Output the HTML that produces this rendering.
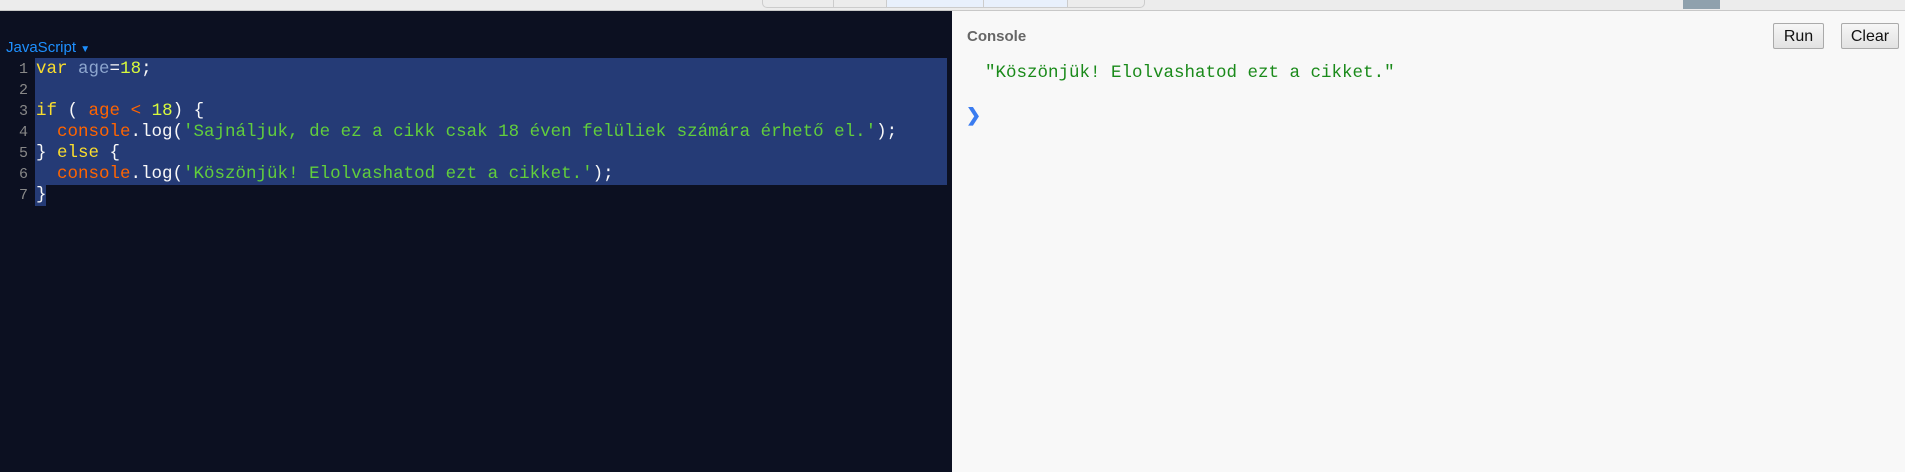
<!DOCTYPE html>
<html><head><meta charset="utf-8"><style>
body{margin:0;width:1905px;height:472px;overflow:hidden;position:relative;background:#f8f8f8;font-family:"Liberation Sans",sans-serif}
.top{position:absolute;left:0;top:0;width:1905px;height:10px;background:#ececec;border-bottom:1px solid #c8c8c8}
.tab{position:absolute;top:0;height:7px;border:1px solid #ccc;border-top:none;background:#ececec}
.left{position:absolute;left:0;top:11px;width:952px;height:461px;background:#0c1021}
.lang{position:absolute;left:6px;top:28px;color:#1e90ff;font-size:15px}
.sel{position:absolute;background:#253b76}
.code{position:absolute;left:0;top:59px;font-family:"Liberation Mono",monospace;font-size:17.5px;line-height:21px;color:#f8f8f8;white-space:pre}
.ln{display:inline-block;width:28px;text-align:right;color:#888;font-size:15px;margin-right:8px}
.k{color:#fbde2d}.v{color:#8da6ce}.n{color:#d8fa3c}.o{color:#ff6400}.s{color:#61ce3c}
.con{position:absolute;left:967px;top:28px;color:#666;font-size:15px;font-weight:bold}
.out{position:absolute;left:985px;top:63px;color:#1a8a1a;font-family:"Liberation Mono",monospace;font-size:17.5px}
.arr{position:absolute;left:966px;top:105px;color:#3a7cf0;font-size:18px;font-weight:bold}
.btn{position:absolute;top:23px;height:26px;border:1px solid #aaa;border-radius:2px;background:linear-gradient(#f6f6f6,#e2e2e2);font-size:16px;line-height:26px;text-align:center;color:#111;box-sizing:border-box}
</style></head><body>
<div class="top">
<div class="tab" style="left:762px;width:71px;border-radius:0 0 0 5px"></div>
<div class="tab" style="left:833px;width:53px"></div>
<div class="tab" style="left:886px;width:97px;background:#e8f0fc"></div>
<div class="tab" style="left:983px;width:84px;background:#e8f0fc"></div>
<div class="tab" style="left:1067px;width:76px;border-radius:0 0 5px 0"></div>
<div style="position:absolute;left:1683px;top:0;width:37px;height:9px;background:#8fa1ad"></div>
</div>
<div class="left">
<div class="lang">JavaScript <span style="font-size:10px">▼</span></div>
</div>
<div class="sel" style="left:35px;top:58px;width:912px;height:127px"></div>
<div class="sel" style="left:35px;top:185px;width:11px;height:21px"></div>
<div class="code"><span class="ln">1</span><span class="k">var</span> <span class="v">age</span>=<span class="n">18</span>;
<span class="ln">2</span>
<span class="ln">3</span><span class="k">if</span> ( <span class="o">age</span> <span class="o">&lt;</span> <span class="n">18</span>) {
<span class="ln">4</span>  <span class="o">console</span>.log(<span class="s">'Sajnáljuk, de ez a cikk csak 18 éven felüliek számára érhető el.'</span>);
<span class="ln">5</span>} <span class="k">else</span> {
<span class="ln">6</span>  <span class="o">console</span>.log(<span class="s">'Köszönjük! Elolvashatod ezt a cikket.'</span>);
<span class="ln">7</span>}</div>
<div class="con">Console</div>
<div class="out">"Köszönjük! Elolvashatod ezt a cikket."</div>
<div class="arr">❯</div>
<div class="btn" style="left:1773px;width:51px">Run</div>
<div class="btn" style="left:1841px;width:58px">Clear</div>
</body></html>
